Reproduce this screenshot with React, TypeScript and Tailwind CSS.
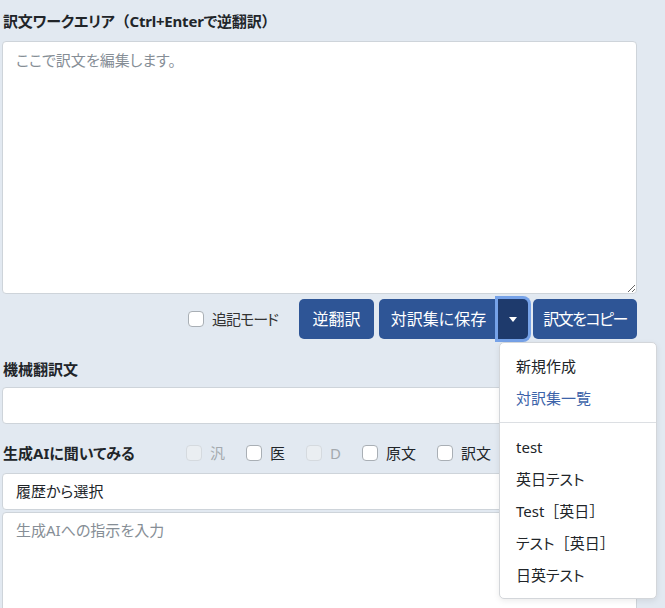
import React from 'react';

const W = ({ children }: { children: React.ReactNode }) => (
  <span className="[font-feature-settings:normal]">{children}</span>
);

const menuItems: React.ReactNode[] = [
  'test',
  '英日テスト',
  <>
    Test<W>［英日］</W>
  </>,
  <>
    テスト<W>［英日］</W>
  </>,
  '日英テスト',
];

const aiOptions = [
  { label: '汎', disabled: true },
  { label: '医', disabled: false },
  { label: 'D', disabled: true },
  { label: '原文', disabled: false },
  { label: '訳文', disabled: false },
];

function Check({ label, disabled }: { label: string; disabled?: boolean }) {
  return (
    <label className="flex items-center gap-2">
      <span
        className={
          disabled
            ? 'w-4 h-4 rounded-[4px] border border-[#d5dadf] bg-[#eaeef2]'
            : 'w-4 h-4 rounded-[4px] border border-[#a9afb5] bg-white'
        }
      />
      <span className={disabled ? 'text-[#a4a9ae]' : 'text-[#212529]'}>{label}</span>
    </label>
  );
}

const App: React.FC = () => {
  return (
    <div className="min-h-screen bg-[#e2e9f1] text-[#212529] text-[15px] font-['Noto_Sans','Noto_Sans_CJK_JP',sans-serif] [font-feature-settings:'palt']">
      <div className="ml-[2px] w-[635px] pb-10">
        <div className="h-[41px] flex items-center pl-[1px] font-bold leading-5 tracking-[-0.2px]">
          訳文ワークエリア<W>（</W>Ctrl+Enterで逆翻訳<W>）</W>
        </div>
        <textarea
          className="block w-full h-[253px] rounded-[4px] border border-[#ced4da] bg-white px-[13px] py-[6px] leading-6 outline-none placeholder:text-[#868e96]"
          placeholder="ここで訳文を編集します。"
        />

        <div className="mt-[5px] flex items-center justify-end h-10">
          <label className="flex items-center gap-2 mr-[21px]">
            <span className="w-4 h-4 rounded-[4px] border border-[#a9afb5] bg-white" />
            <span className="text-[#333] tracking-[-1px]">追記モード</span>
          </label>
          <button className="h-10 w-[75px] rounded-[5px] bg-[#2e5596] text-white text-[16px]">逆翻訳</button>
          <div className="ml-[5px] flex h-10">
            <button className="h-10 w-[119px] rounded-l-[5px] bg-[#2e5596] text-white text-[16px]">
              対訳集に保存
            </button>
            <div className="relative">
              <button className="h-10 w-[30px] flex items-center justify-center rounded-r-[5px] bg-[#1e3a6c] shadow-[0_0_0_3px_#76a2e8]">
                <span className="w-0 h-0 border-t-[5px] border-t-white border-x-[4px] border-x-transparent" />
              </button>
              <div className="absolute left-[1px] top-[43px] w-[158px] pt-[7px] pb-[7px] rounded-[5px] border border-[#d3d6da] bg-white shadow-[0_2px_6px_rgba(0,0,0,0.08)] z-10">
                <div className="h-8 flex items-center px-4">新規作成</div>
                <div className="h-8 flex items-center px-4 text-[#3c63a9]">対訳集一覧</div>
                <div className="my-2 border-t border-[#dcdfe3]" />
                {menuItems.map((item, i) => (
                  <div key={i} className="h-8 flex items-center px-4">
                    {item}
                  </div>
                ))}
              </div>
            </div>
          </div>
          <button className="ml-[5px] h-10 w-[104px] rounded-[5px] bg-[#2e5596] text-white text-[16px] tracking-[-1.5px]">
            訳文をコピー
          </button>
        </div>

        <div className="pt-5 pl-[1px] leading-5 font-bold mb-2">機械翻訳文</div>
        <div className="h-[37px] rounded-[4px] border border-[#ced4da] bg-white" />

        <div className="pt-[19px] mb-[10px] flex items-center h-[39px] leading-5">
          <div className="w-[184px] pl-[1px] font-bold">生成AIに聞いてみる</div>
          <div className="flex items-center gap-[21px]">
            {aiOptions.map((o) => (
              <Check key={o.label} label={o.label} disabled={o.disabled} />
            ))}
          </div>
        </div>

        <div className="h-[37px] flex items-center justify-between rounded-[4px] border border-[#ced4da] bg-white pl-[13px] pr-3">
          <span>履歴から選択</span>
          <svg width="14" height="14" viewBox="0 0 16 16" fill="none" stroke="#343a40" strokeWidth="2">
            <path d="M2 5l6 6 6-6" />
          </svg>
        </div>
        <textarea
          className="mt-[2px] block w-full h-[130px] rounded-[4px] border border-[#ced4da] bg-white px-[13px] py-[5px] leading-6 outline-none placeholder:text-[#868e96]"
          placeholder="生成AIへの指示を入力"
        />
      </div>
    </div>
  );
};

export default App;
